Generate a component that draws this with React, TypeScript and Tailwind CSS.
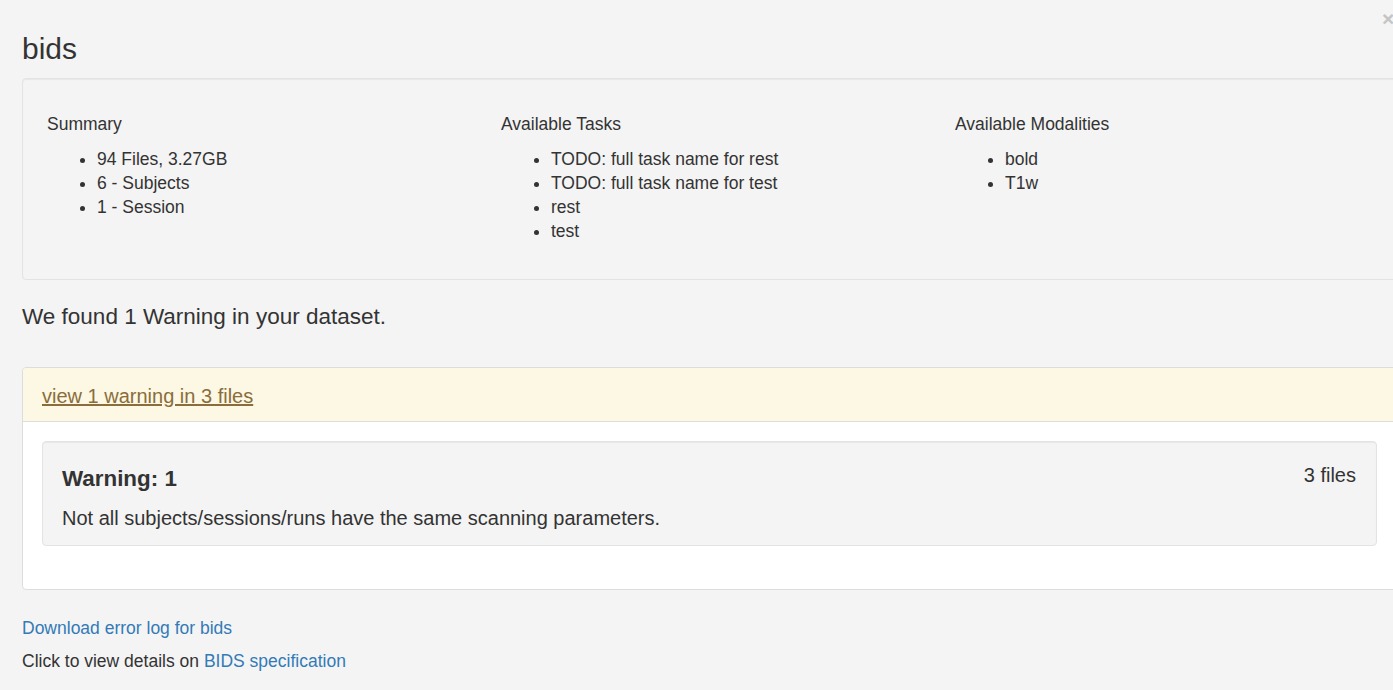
import React from 'react';

const summary = ['94 Files, 3.27GB', '6 - Subjects', '1 - Session'];
const tasks = ['TODO: full task name for rest', 'TODO: full task name for test', 'rest', 'test'];
const modalities = ['bold', 'T1w'];

function Column({ title, items }: { title: string; items: string[] }) {
  return (
    <div className="w-[454px] shrink-0">
      <h5 className="text-[17.5px] leading-[24px]">{title}</h5>
      <ul className="mt-[11px] list-disc pl-[50px] text-[17.5px] leading-[24px]">
        {items.map((it) => (
          <li key={it}>{it}</li>
        ))}
      </ul>
    </div>
  );
}

export default function App() {
  return (
    <div
      className="relative w-[1393px] h-[690px] overflow-hidden bg-[#f4f4f4] text-[#333]"
      style={{ fontFamily: '"Liberation Sans", Arial, sans-serif' }}
    >
      {/* close */}
      <span className="absolute left-[1382px] top-[6px] text-[21px] font-bold leading-[26px] text-[#c4c4c4]">
        ×
      </span>

      <div className="w-[1375px] ml-[22px] pt-[32px]">
        <h1 className="text-[30px] leading-[33px] mb-[13px]">bids</h1>

        {/* summary well */}
        <div className="flex rounded-[4px] border border-[#e3e3e3] bg-[#f4f4f4] pl-[24px] pt-[33px] pb-[36px] shadow-[inset_0_1px_1px_rgba(0,0,0,0.05)]">
          <Column title="Summary" items={summary} />
          <Column title="Available Tasks" items={tasks} />
          <Column title="Available Modalities" items={modalities} />
        </div>

        <h4 className="mt-[22px] text-[22.5px] leading-[30px]">We found 1 Warning in your dataset.</h4>

        {/* warning panel */}
        <div className="mt-[35px] rounded-[4px] border border-[#dddddd] bg-white">
          <div className="flex h-[54px] items-center rounded-t-[4px] border-b border-[#dddddd] bg-[#fcf8e3] px-[19px]">
            <a href="#" className="mt-[2px] text-[20px] leading-[28px] text-[#8a6d3b] underline">
              view 1 warning in 3 files
            </a>
          </div>
          <div className="px-[19px] pt-[19px] pb-[43px]">
            <div className="rounded-[4px] border border-[#e3e3e3] bg-[#f4f4f4] pl-[19px] pr-[20px] pt-[24px] pb-[13px] shadow-[inset_0_1px_1px_rgba(0,0,0,0.05)]">
              <div className="flex items-start justify-between">
                <span className="text-[22.4px] font-bold leading-[26px]">Warning: 1</span>
                <span className="-mt-[4px] text-[20px] leading-[26px]">3 files</span>
              </div>
              <p className="mt-[12px] text-[20px] leading-[28px]">
                Not all subjects/sessions/runs have the same scanning parameters.
              </p>
            </div>
          </div>
        </div>

        {/* footer links */}
        <div className="mt-[26px] text-[17.5px] leading-[25px]">
          <a href="#" className="text-[#337ab7]">Download error log for bids</a>
          <p className="mt-[8px]">
            Click to view details on <a href="#" className="text-[#337ab7]">BIDS specification</a>
          </p>
        </div>
      </div>
    </div>
  );
}
